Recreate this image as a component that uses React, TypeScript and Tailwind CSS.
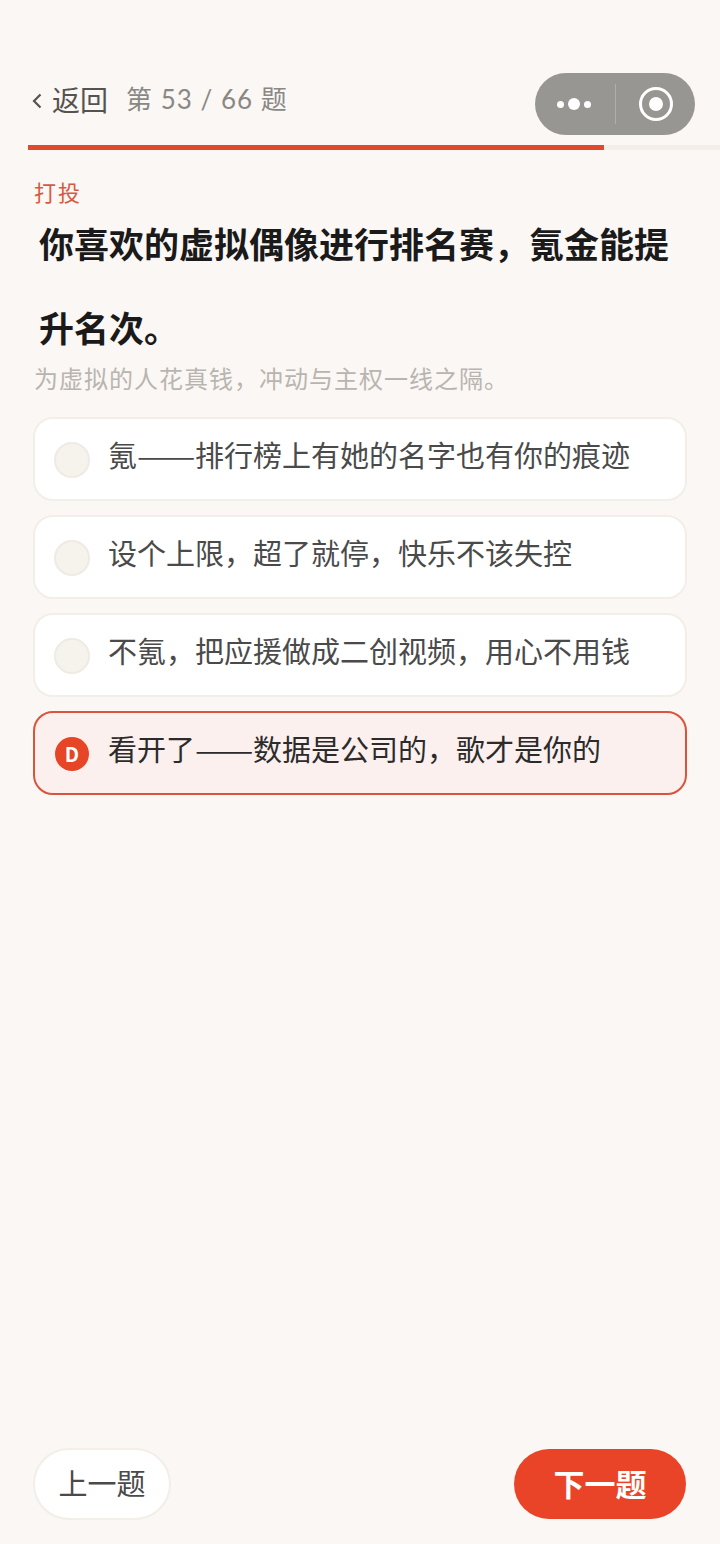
const options = [
  { key: 'A', before: '氪', dash: true, after: '排行榜上有她的名字也有你的痕迹' },
  { key: 'B', before: '设个上限，超了就停，快乐不该失控' },
  { key: 'C', before: '不氪，把应援做成二创视频，用心不用钱' },
  { key: 'D', before: '看开了', dash: true, after: '数据是公司的，歌才是你的', selected: true },
];

function Capsule() {
  return (
    <div className="absolute left-[535px] top-[73px] flex h-[62px] w-[160px] items-center rounded-full bg-[#989693]">
      <div className="flex w-[80px] items-center justify-center gap-[4px] pr-[2px]">
        <span className="h-[7px] w-[7px] rounded-full bg-white" />
        <span className="h-[12px] w-[12px] rounded-full bg-white" />
        <span className="h-[7px] w-[7px] rounded-full bg-white" />
      </div>
      <div className="h-[40px] w-px bg-[#b0aeab]" />
      <div className="flex flex-1 items-center justify-center">
        <div className="flex h-[34px] w-[34px] items-center justify-center rounded-full border-[3px] border-white">
          <span className="h-[14px] w-[14px] rounded-full bg-white" />
        </div>
      </div>
    </div>
  );
}

export default function App() {
  return (
    <div className="relative flex min-h-[1544px] w-[720px] flex-col bg-[#fbf7f4] font-['Noto_Sans_CJK_SC',sans-serif]">
      <header className="flex h-[145px] items-start pl-[32px] pt-[79px]">
        <div className="flex h-[40px] items-center text-[#555350]">
          <svg width="10" height="16" viewBox="0 0 10 16" fill="none" className="mr-[10px] mt-[4px]">
            <path d="M8.5 1.5 L2 8 L8.5 14.5" stroke="currentColor" strokeWidth="2.2" />
          </svg>
          <span className="text-[28px] leading-[40px]">返回</span>
        </div>
        <span className="ml-[18px] whitespace-nowrap font-['Lato','Noto_Sans_CJK_SC',sans-serif] text-[26px] leading-[40px] tracking-[1px] text-[#8a8885]">
          第 53 / 66 题
        </span>
      </header>
      <Capsule />

      <div className="ml-[28px] h-[5px] bg-[#f3eee8]">
        <div className="h-full w-[576px] bg-[#e0492b]" />
      </div>

      <main className="px-[33px] pt-[29px]">
        <div className="pl-[1px] text-[22px] leading-[24px] tracking-[2px] text-[#d65a42]">打投</div>
        <h1 className="mt-[-2px] pl-[6px] text-[35px] font-bold leading-[84px] text-[#1a1a1a]">
          你喜欢的虚拟偶像进行排名赛，氪金能提升名次。
        </h1>
        <p className="mt-[-1px] pl-[1px] text-[24px] leading-[20px] tracking-[1px] text-[#b8b5b1]">
          为虚拟的人花真钱，冲动与主权一线之隔。
        </p>
        <div className="mt-[29px] flex flex-col gap-[14px]">
          {options.map((o) => (
            <div
              key={o.key}
              className={
                o.selected
                  ? 'flex h-[84px] items-center rounded-[20px] border-2 border-[#d9543a] bg-[#fbf0ed] pl-[20px]'
                  : 'flex h-[84px] items-center rounded-[20px] border-2 border-[#f3eee8] bg-white pl-[19px]'
              }
            >
              {o.selected ? (
                <span className="mt-[1px] flex h-[34px] w-[34px] shrink-0 items-center justify-center rounded-full bg-[#e64526] text-[20px] font-bold text-white">
                  {o.key}
                </span>
              ) : (
                <span className="mt-[1px] h-[36px] w-[36px] shrink-0 rounded-full border-2 border-[#efeae4] bg-[#f6f3ed]" />
              )}
              <span
                className={
                  o.selected
                    ? 'mb-[10px] ml-[19px] whitespace-nowrap text-[29px] leading-[40px] text-[#2b2b2b]'
                    : 'mb-[10px] ml-[18px] whitespace-nowrap text-[29px] leading-[40px] text-[#4a4a4a]'
                }
              >
                {o.before}
                {o.dash && <span className="inline-block w-[58px] origin-left scale-x-[1.2]">——</span>}
                {o.after}
              </span>
            </div>
          ))}
        </div>
      </main>

      <footer className="mt-auto flex items-center justify-between px-[33px] pb-[24px]">
        <button className="flex h-[72px] w-[138px] items-center justify-center rounded-full border-2 border-[#f3eee8] bg-white pb-[2px] text-[29px] text-[#4a4a4a]">
          上一题
        </button>
        <button className="mr-px flex h-[70px] w-[172px] items-center justify-center rounded-full bg-[#e94427] pb-[2px] text-[31px] font-bold text-white">
          下一题
        </button>
      </footer>
    </div>
  );
}
